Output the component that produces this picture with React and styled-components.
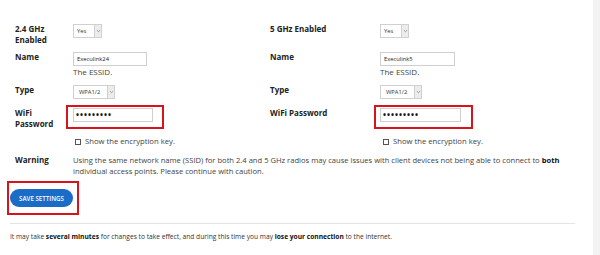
import React from "react";
import styled, { createGlobalStyle } from "styled-components";

const Global = createGlobalStyle`
  html, body { margin: 0; padding: 0; background: #fff; }
  body { font-family: "Open Sans", "Noto Sans", sans-serif; color: #333; }
`;

const Page = styled.div`
  display: flex;
  width: 600px;
  height: 255px;
  overflow: hidden;
`;

const Main = styled.div`
  width: 593px;
  padding-top: 24px;
  box-sizing: border-box;
`;

const Side = styled.div`
  flex: 1;
  background: #f3f3f3;
`;

const Columns = styled.div`
  display: grid;
  grid-template-columns: 255px 1fr;
  padding-left: 15px;
`;

const Column = styled.div`
  display: grid;
  grid-template-columns: ${(p) => p.$labelWidth}px 1fr;
  align-items: start;
  align-content: start;
`;

const Label = styled.div`
  font-size: 8px;
  font-weight: 700;
  line-height: 11px;
  color: #222;
  margin-top: -1px;
  padding-right: ${(p) => p.$pr || 0}px;
`;

const Cell = styled.div`
  display: flex;
  flex-direction: column;
  align-items: flex-start;
  margin-bottom: ${(p) => p.$mb || 0}px;
`;

const Select = styled.div`
  display: flex;
  align-items: stretch;
  height: 14px;
  box-sizing: border-box;
  border: 1px solid #d0d0d0;
  background: #fff;
  font-size: 5.8px;
  color: #333;
`;

const SelectText = styled.span`
  display: flex;
  align-items: center;
  padding: 0 ${(p) => p.$pr}px 0 ${(p) => p.$pl}px;
`;

const Arrow = styled.span`
  width: 6px;
  background: #ececec;
  border-left: 1px solid #d0d0d0;
  display: flex;
  align-items: center;
  justify-content: center;
  svg { display: block; }
`;

const TextInput = styled.div`
  width: ${(p) => p.$w}px;
  height: 14px;
  box-sizing: border-box;
  border: 1px solid #cfcfcf;
  background: #fff;
  font-size: 5.8px;
  line-height: 12px;
  padding-left: ${(p) => p.$pl || 3}px;
  color: #222;
  white-space: nowrap;
`;

const Dots = styled.span`
  font-size: 8px;
  letter-spacing: 1px;
  font-weight: 700;
  color: #111;
`;

const Help = styled.div`
  font-size: 8px;
  line-height: 11px;
  color: #444;
`;

const Marked = styled.div`
  position: relative;
`;

const RedBox = styled.div`
  position: absolute;
  top: ${(p) => p.$t}px;
  left: ${(p) => p.$l}px;
  right: ${(p) => p.$r}px;
  bottom: ${(p) => p.$b}px;
  border: 2px solid #d7141c;
  pointer-events: none;
`;

const CheckLine = styled.div`
  display: grid;
  grid-template-columns: 255px 1fr;
  padding-left: 15px;
  margin-top: 7px;
`;

const CheckRow = styled.div`
  display: flex;
  align-items: center;
  gap: 4px;
  font-size: 7.7px;
  line-height: 11px;
  color: #444;
  padding-left: ${(p) => p.$pl}px;
`;

const Box = styled.span`
  width: 6px;
  height: 6px;
  border: 1px solid #555;
  box-sizing: border-box;
`;

const WarningRow = styled.div`
  display: grid;
  grid-template-columns: 58px 1fr;
  padding-left: 15px;
  margin-top: 8px;
  width: 570px;
  box-sizing: border-box;
`;

const WarningLabel = styled.div`
  font-size: 8px;
  font-weight: 700;
  line-height: 10.5px;
  color: #222;
`;

const WarningText = styled.div`
  font-size: 7.6px;
  line-height: 10.5px;
  color: #444;
  b { color: #111; }
`;

const ButtonArea = styled.div`
  display: flex;
  padding: 13px 0 0 10px;
`;

const Button = styled.button`
  width: 63px;
  height: 18px;
  border: none;
  border-radius: 9px;
  background: #1a6cc6;
  color: #fff;
  font-family: "Open Sans", sans-serif;
  font-size: 6.2px;
  font-weight: 600;
  padding: 0;
  display: block;
`;

const Rule = styled.hr`
  margin: 16px 0 0 10px;
  width: 565px;
  height: 0;
  border: none;
  border-top: 1px solid #e4e4e4;
`;

const Note = styled.p`
  margin: 8px 0 0 10px;
  font-size: 6.65px;
  line-height: 9px;
  color: #333;
  b { font-weight: 700; color: #111; }
`;

const Chevron = () => (
  <svg width="5" height="4" viewBox="0 0 5 4">
    <path d="M0.9 1.2 L2.5 2.7 L4.1 1.2" fill="none" stroke="#888" strokeWidth="0.8" />
  </svg>
);

const Sel = ({ value, pl, pr }) => (
  <Select>
    <SelectText $pl={pl} $pr={pr}>{value}</SelectText>
    <Arrow><Chevron /></Arrow>
  </Select>
);

const Band = ({ labelWidth, labelPad, enabledLabel, ssid, nameWidth, pwWidth, boxLeft, boxRight }) => (
  <Column $labelWidth={labelWidth}>
    <Label $pr={labelPad}>{enabledLabel}</Label>
    <Cell $mb={14}>
      <Sel value="Yes" pl={3} pr={8} />
    </Cell>
    <Label $pr={labelPad}>Name</Label>
    <Cell $mb={8}>
      <TextInput $w={nameWidth}>{ssid}</TextInput>
      <Help>The ESSID.</Help>
    </Cell>
    <Label $pr={labelPad}>Type</Label>
    <Cell $mb={9}>
      <Sel value="WPA1/2" pl={5} pr={7} />
    </Cell>
    <Label $pr={labelPad}>WiFi Password</Label>
    <Cell>
      <Marked>
        <TextInput $w={pwWidth} $pl={2}><Dots>•••••••••</Dots></TextInput>
        <RedBox $t={-3} $l={boxLeft} $r={boxRight} $b={-7} />
      </Marked>
    </Cell>
  </Column>
);

export default function App() {
  return (
    <>
      <Global />
      <Page>
        <Main>
          <Columns>
            <Band labelWidth={58} labelPad={10} enabledLabel="2.4 GHz Enabled" ssid="Execulink24" nameWidth={74} pwWidth={80} boxLeft={-7} boxRight={-11} />
            <Band labelWidth={110} labelPad={0} enabledLabel="5 GHz Enabled" ssid="Execulink5" nameWidth={75} pwWidth={81} boxLeft={-6} boxRight={-12} />
          </Columns>
          <CheckLine>
            <CheckRow $pl={60}><Box />Show the encryption key.</CheckRow>
            <CheckRow $pl={113}><Box />Show the encryption key.</CheckRow>
          </CheckLine>
          <WarningRow>
            <WarningLabel>Warning</WarningLabel>
            <WarningText>
              Using the same network name (SSID) for both 2.4 and 5 GHz radios may cause issues with client devices not being able to connect to <b>both</b> individual access points. Please continue with caution.
            </WarningText>
          </WarningRow>
          <ButtonArea>
            <Marked>
              <Button>SAVE SETTINGS</Button>
              <RedBox $t={-8} $l={-3} $r={-6} $b={-8} />
            </Marked>
          </ButtonArea>
          <Rule />
          <Note>
            It may take <b>several minutes</b> for changes to take effect, and during this time you may <b>lose your connection</b> to the internet.
          </Note>
        </Main>
        <Side />
      </Page>
    </>
  );
}
